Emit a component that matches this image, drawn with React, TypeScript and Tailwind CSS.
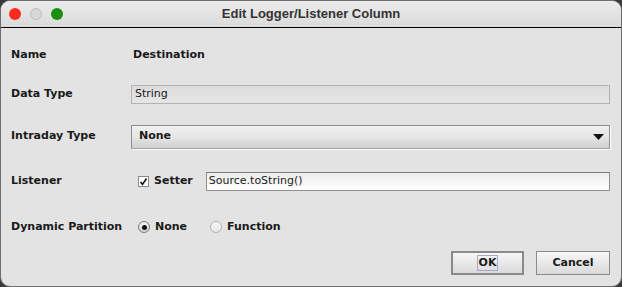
import React from "react";

const font = { fontFamily: '"DejaVu Sans", "Liberation Sans", sans-serif' };
const titleFont = { fontFamily: '"Liberation Sans", Arial, sans-serif' };

function Check() {
  return (
    <div className="w-[11px] h-[11px] border border-[#8a8a8a] bg-white flex items-center justify-center">
      <svg width="9" height="9" viewBox="0 0 9 9">
        <path d="M1.5 5 L3.5 7.5 L7.5 1.5" stroke="#111" strokeWidth="1.6" fill="none" />
      </svg>
    </div>
  );
}

function Radio({ on }: { on?: boolean }) {
  return (
    <div
      className={`w-[12px] h-[12px] rounded-full border flex items-center justify-center ${
        on ? "border-[#7a7a7a] bg-gradient-to-b from-[#f4f4f4] to-[#d4d4d4]" : "border-[#b0b0b0] bg-gradient-to-b from-[#f8f8f8] to-[#e6e6e6]"
      }`}
    >
      {on && <div className="w-[5px] h-[5px] rounded-full bg-[#111]" />}
    </div>
  );
}

export default function App() {
  return (
    <div className="w-[622px] h-[287px] bg-[#3a3a3a] text-[11px] text-[#1a1a1a]" style={font}>
      <div className="w-full h-full rounded-[10px] overflow-hidden bg-[#e3e3e3] border border-[#6e6e6e] flex flex-col">
        {/* Title bar */}
        <div className="h-[27px] shrink-0 relative flex items-center justify-center bg-gradient-to-b from-[#ececec] to-[#dadada] border-b border-black">
          <div className="absolute left-[8px] top-[7px] flex gap-[9px]">
            <div className="w-[12px] h-[12px] rounded-full bg-[#fe2c1e]" />
            <div className="w-[12px] h-[12px] rounded-full bg-[#d8d8d8] border border-[#bdbdbd]" />
            <div className="w-[12px] h-[12px] rounded-full bg-[#1a8f10]" />
          </div>
          <span className="font-bold text-[13px] text-[#333333]" style={titleFont}>
            Edit Logger/Listener Column
          </span>
        </div>

        <div className="flex flex-col pl-[10px] pr-[11px]">
          {/* Name */}
          <div className="flex items-center h-[24px] mt-[15px]">
            <div className="w-[121px] font-bold">Name</div>
            <div className="font-bold pl-[1px]">Destination</div>
          </div>
          {/* Data Type */}
          <div className="flex items-center h-[24px] mt-[15px]">
            <div className="w-[120px] font-bold">Data Type</div>
            <div className="flex-1 h-[19px] border border-[#b3b3b3] bg-gradient-to-b from-[#dcdcdc] to-[#e6e6e6] flex items-center pl-[3px]">
              String
            </div>
          </div>
          {/* Intraday Type */}
          <div className="flex items-center h-[25px] mt-[18px]">
            <div className="w-[120px] font-bold">Intraday Type</div>
            <div className="flex-1 h-[24px] border border-[#8e8e8e] border-b-[#a0a0a0] shadow-[1px_1px_0_#ffffff] bg-gradient-to-b from-[#f0f0f0] via-[#e6e6e6] to-[#cfcfcf] flex items-center pl-[7px] pr-[5px] justify-between">
              <span className="font-bold">None</span>
              <svg width="11" height="6" viewBox="0 0 11 6">
                <path d="M0 0 H11 L5.5 6 Z" fill="#111" />
              </svg>
            </div>
          </div>
          {/* Listener */}
          <div className="flex items-center h-[24px] mt-[20px]">
            <div className="w-[120px] font-bold">Listener</div>
            <div className="pl-[7px] flex items-center">
              <Check />
              <span className="font-bold ml-[5px]">Setter</span>
            </div>
            <div className="flex-1 ml-[13px] h-[19px] border border-[#8f8f8f] border-t-[#7a7a7a] bg-gradient-to-b from-[#ededed] to-[#ffffff] flex items-center pl-[2px]">
              Source.toString()
            </div>
          </div>
          {/* Dynamic Partition */}
          <div className="flex items-center h-[24px] mt-[22px]">
            <div className="w-[120px] font-bold whitespace-nowrap">Dynamic Partition</div>
            <div className="pl-[7px] flex items-center">
              <Radio on />
              <span className="font-bold ml-[5px]">None</span>
            </div>
            <div className="pl-[23px] flex items-center">
              <Radio />
              <span className="font-bold ml-[5px]">Function</span>
            </div>
          </div>
          {/* Buttons */}
          <div className="flex justify-end gap-[12px] mt-[12px]">
            <button className="w-[73px] h-[24px] border-2 border-[#8a8a8a] bg-gradient-to-b from-[#f7f7f7] to-[#dadada] flex items-center justify-center font-bold">
              <span className="border border-[#a8a8c8] px-[1px] leading-[14px]">OK</span>
            </button>
            <button className="w-[74px] h-[24px] border border-[#8a8a8a] bg-gradient-to-b from-[#f7f7f7] to-[#dadada] flex items-center justify-center font-bold">
              Cancel
            </button>
          </div>
        </div>
      </div>
    </div>
  );
}
